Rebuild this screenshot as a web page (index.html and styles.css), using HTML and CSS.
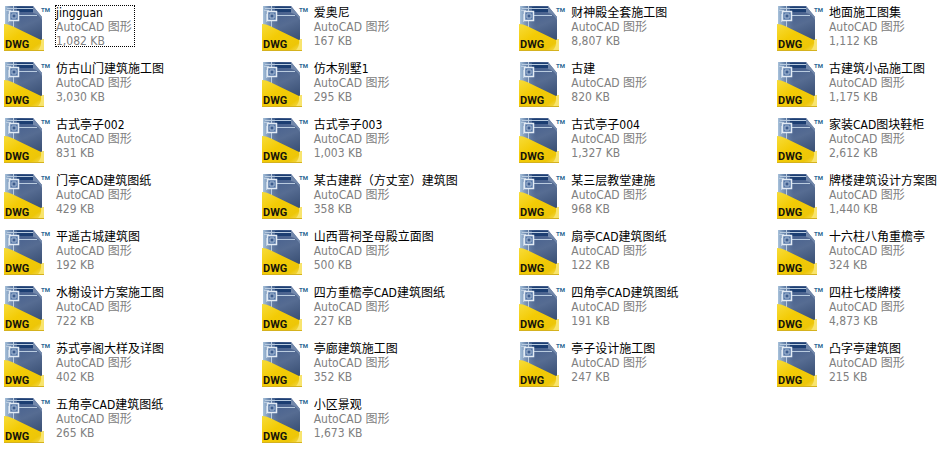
FILE: index.html
```
<!DOCTYPE html>
<html lang="zh-CN">
    <head>
        <meta charset="utf-8">
        <title>AutoCAD 图形</title>
        <meta name="viewport" content="width=device-width, initial-scale=1">
        <link rel="stylesheet" href="styles.css">
    </head>
    <body>
        <svg class="sprite" aria-hidden="true">
            <defs>
                <linearGradient id="sheet" x1="0" y1="0" x2="0.4" y2="1">
                    <stop offset="0" stop-color="#1d3f74"/>
                    <stop offset="0.3" stop-color="#4a6390"/>
                    <stop offset="0.6" stop-color="#566c92"/>
                    <stop offset="1" stop-color="#3c5277"/>
                </linearGradient>
                <linearGradient id="fade" x1="0" y1="0" x2="1" y2="0">
                    <stop offset="0" stop-color="#a9c3dc"/>
                    <stop offset="1" stop-color="#6d88b0" stop-opacity="0"/>
                </linearGradient>
                <linearGradient id="band" x1="0" y1="0" x2="1" y2="1">
                    <stop offset="0" stop-color="#f7dc3a"/>
                    <stop offset="0.4" stop-color="#f3cb05"/>
                    <stop offset="0.8" stop-color="#edc608"/>
                    <stop offset="1" stop-color="#f6e064"/>
                </linearGradient>
            </defs>
            <symbol id="dwg" viewBox="0 0 52 48">
                <path fill="url(#sheet)" d="M2 1H30L39 12V42H2Z"/>
                <path fill="url(#fade)" d="M2 1H18V27L2 21Z"/>
                <path fill="#7288ab" d="M30 1L39 12V15Q36 9 30 8Z"/>
                <path fill="#1c3e72" d="M14 2H30V7H14Z"/>
                <path fill="none" stroke="#b9cbdf" d="M3 5.500H8M4 3.500H30M10.500 1V6M10.500 15V22M5.500 9V17M16 10.500H34"/>
                <path fill="#5778a8" stroke="#e3ebf4" stroke-width="1.500" d="M6.500 6.500H15.500V15.500H6.500Z"/>
                <path fill="#3c5c8e" stroke="#a9bcd5" d="M9 9H13V13H9Z"/>
                <path fill="url(#band)" d="M1 19Q5 19 9 21L38 35L41 34V46H1Z"/>
                <path fill="#f8e46e" d="M38 35L41 34V46H34Q39 42 38 35Z"/>
                <path fill="none" stroke="#d5b21e" d="M1 45.500H41"/>
                <text class="tag" x="2" y="43">DWG</text>
                <text class="mark" x="38" y="7">TM</text>
            </symbol>
        </svg>
        <main>
            <ul class="files">
                <li class="file selected"><svg class="icon"><use href="#dwg"/></svg><div class="info"><p class="name">jingguan</p><p>AutoCAD 图形</p><p>1,082 KB</p></div></li>
                <li class="file"><svg class="icon"><use href="#dwg"/></svg><div class="info"><p class="name">爱奥尼</p><p>AutoCAD 图形</p><p>167 KB</p></div></li>
                <li class="file"><svg class="icon"><use href="#dwg"/></svg><div class="info"><p class="name">财神殿全套施工图</p><p>AutoCAD 图形</p><p>8,807 KB</p></div></li>
                <li class="file"><svg class="icon"><use href="#dwg"/></svg><div class="info"><p class="name">地面施工图集</p><p>AutoCAD 图形</p><p>1,112 KB</p></div></li>

                <li class="file"><svg class="icon"><use href="#dwg"/></svg><div class="info"><p class="name">仿古山门建筑施工图</p><p>AutoCAD 图形</p><p>3,030 KB</p></div></li>
                <li class="file"><svg class="icon"><use href="#dwg"/></svg><div class="info"><p class="name">仿木别墅1</p><p>AutoCAD 图形</p><p>295 KB</p></div></li>
                <li class="file"><svg class="icon"><use href="#dwg"/></svg><div class="info"><p class="name">古建</p><p>AutoCAD 图形</p><p>820 KB</p></div></li>
                <li class="file"><svg class="icon"><use href="#dwg"/></svg><div class="info"><p class="name">古建筑小品施工图</p><p>AutoCAD 图形</p><p>1,175 KB</p></div></li>

                <li class="file"><svg class="icon"><use href="#dwg"/></svg><div class="info"><p class="name">古式亭子002</p><p>AutoCAD 图形</p><p>831 KB</p></div></li>
                <li class="file"><svg class="icon"><use href="#dwg"/></svg><div class="info"><p class="name">古式亭子003</p><p>AutoCAD 图形</p><p>1,003 KB</p></div></li>
                <li class="file"><svg class="icon"><use href="#dwg"/></svg><div class="info"><p class="name">古式亭子004</p><p>AutoCAD 图形</p><p>1,327 KB</p></div></li>
                <li class="file"><svg class="icon"><use href="#dwg"/></svg><div class="info"><p class="name">家装CAD图块鞋柜</p><p>AutoCAD 图形</p><p>2,612 KB</p></div></li>

                <li class="file"><svg class="icon"><use href="#dwg"/></svg><div class="info"><p class="name">门亭CAD建筑图纸</p><p>AutoCAD 图形</p><p>429 KB</p></div></li>
                <li class="file"><svg class="icon"><use href="#dwg"/></svg><div class="info"><p class="name">某古建群（方丈室）建筑图</p><p>AutoCAD 图形</p><p>358 KB</p></div></li>
                <li class="file"><svg class="icon"><use href="#dwg"/></svg><div class="info"><p class="name">某三层教堂建施</p><p>AutoCAD 图形</p><p>968 KB</p></div></li>
                <li class="file"><svg class="icon"><use href="#dwg"/></svg><div class="info"><p class="name">牌楼建筑设计方案图</p><p>AutoCAD 图形</p><p>1,440 KB</p></div></li>

                <li class="file"><svg class="icon"><use href="#dwg"/></svg><div class="info"><p class="name">平遥古城建筑图</p><p>AutoCAD 图形</p><p>192 KB</p></div></li>
                <li class="file"><svg class="icon"><use href="#dwg"/></svg><div class="info"><p class="name">山西晋祠圣母殿立面图</p><p>AutoCAD 图形</p><p>500 KB</p></div></li>
                <li class="file"><svg class="icon"><use href="#dwg"/></svg><div class="info"><p class="name">扇亭CAD建筑图纸</p><p>AutoCAD 图形</p><p>122 KB</p></div></li>
                <li class="file"><svg class="icon"><use href="#dwg"/></svg><div class="info"><p class="name">十六柱八角重檐亭</p><p>AutoCAD 图形</p><p>324 KB</p></div></li>

                <li class="file"><svg class="icon"><use href="#dwg"/></svg><div class="info"><p class="name">水榭设计方案施工图</p><p>AutoCAD 图形</p><p>722 KB</p></div></li>
                <li class="file"><svg class="icon"><use href="#dwg"/></svg><div class="info"><p class="name">四方重檐亭CAD建筑图纸</p><p>AutoCAD 图形</p><p>227 KB</p></div></li>
                <li class="file"><svg class="icon"><use href="#dwg"/></svg><div class="info"><p class="name">四角亭CAD建筑图纸</p><p>AutoCAD 图形</p><p>191 KB</p></div></li>
                <li class="file"><svg class="icon"><use href="#dwg"/></svg><div class="info"><p class="name">四柱七楼牌楼</p><p>AutoCAD 图形</p><p>4,873 KB</p></div></li>

                <li class="file"><svg class="icon"><use href="#dwg"/></svg><div class="info"><p class="name">苏式亭阁大样及详图</p><p>AutoCAD 图形</p><p>402 KB</p></div></li>
                <li class="file"><svg class="icon"><use href="#dwg"/></svg><div class="info"><p class="name">亭廊建筑施工图</p><p>AutoCAD 图形</p><p>352 KB</p></div></li>
                <li class="file"><svg class="icon"><use href="#dwg"/></svg><div class="info"><p class="name">亭子设计施工图</p><p>AutoCAD 图形</p><p>247 KB</p></div></li>
                <li class="file"><svg class="icon"><use href="#dwg"/></svg><div class="info"><p class="name">凸字亭建筑图</p><p>AutoCAD 图形</p><p>215 KB</p></div></li>

                <li class="file"><svg class="icon"><use href="#dwg"/></svg><div class="info"><p class="name">五角亭CAD建筑图纸</p><p>AutoCAD 图形</p><p>265 KB</p></div></li>
                <li class="file"><svg class="icon"><use href="#dwg"/></svg><div class="info"><p class="name">小区景观</p><p>AutoCAD 图形</p><p>1,673 KB</p></div></li>
            </ul>
        </main>
    </body>
</html>
```
FILE: styles.css
```
:root {
    --color-name: #000;
    --color-details: #808080;
    --color-mark: #2a6592;
    --font-list: "DejaVu Sans Condensed", "Noto Sans CJK SC", sans-serif;
    --font-icon: Roboto, "Liberation Sans", sans-serif;
}
* { padding: 0; margin: 0; box-sizing: border-box; }
body { background-color: white; font-family: var(--font-list); font-size: 12px; line-height: 16px; }
main { padding: 5px 5px 0 3px; }
.sprite { position: absolute; width: 0; height: 0; }
.sprite, .icon, symbol { overflow: visible; }
/* the last column is only as wide as its longest name */
.files {
    display: grid; grid-template-columns: repeat(3, minmax(0, 1fr)) auto;
    row-gap: 8px; list-style: none;
}
.file { display: flex; align-items: flex-start; white-space: nowrap; }
.icon { flex: none; width: 52px; height: 48px; }
.info { padding: 0 1px; color: var(--color-details); }
.info p { height: 14px; }
.info .name { color: var(--color-name); }
.selected .info { height: 42px; padding-right: 3px; outline: 1px dotted black; outline-offset: -1px; }
/* lettering inside the icon */
.tag { font: bold 11px var(--font-icon); fill: #17150a; }
.mark { font: bold 6px var(--font-icon); fill: var(--color-mark); }
```
